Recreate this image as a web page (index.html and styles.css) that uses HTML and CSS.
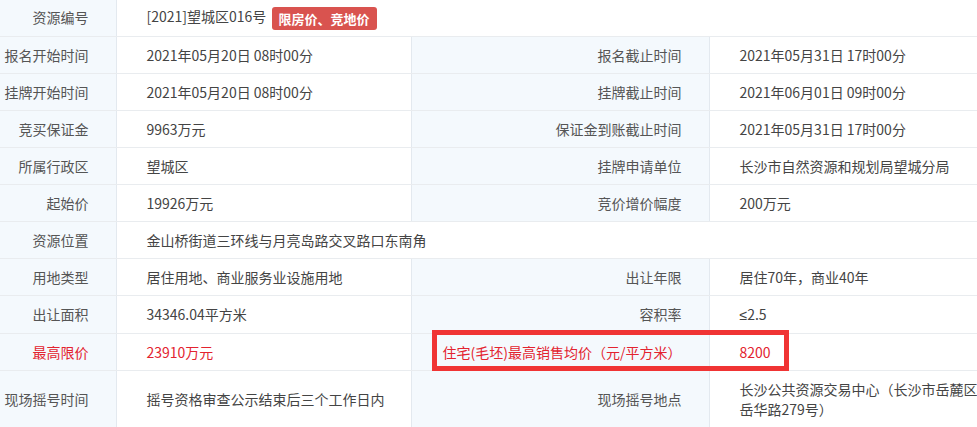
FILE: index.html
```html
<!DOCTYPE html>
<html lang="zh-CN">
<head>
<meta charset="utf-8">
<title>资源详情</title>
<link rel="stylesheet" href="styles.css">
</head>
<body>
<div class="wrap">
  <table class="info">
    <colgroup>
      <col class="c1"><col class="c2"><col class="c3"><col class="c4">
    </colgroup>
    <tbody>
      <tr>
        <th>资源编号</th>
        <td colspan="3">[2021]望城区016号 <span class="badge">限房价、竞地价</span></td>
      </tr>
      <tr>
        <th>报名开始时间</th><td>2021年05月20日 08时00分</td>
        <th>报名截止时间</th><td>2021年05月31日 17时00分</td>
      </tr>
      <tr>
        <th>挂牌开始时间</th><td>2021年05月20日 08时00分</td>
        <th>挂牌截止时间</th><td>2021年06月01日 09时00分</td>
      </tr>
      <tr>
        <th>竞买保证金</th><td>9963万元</td>
        <th>保证金到账截止时间</th><td>2021年05月31日 17时00分</td>
      </tr>
      <tr>
        <th>所属行政区</th><td>望城区</td>
        <th>挂牌申请单位</th><td>长沙市自然资源和规划局望城分局</td>
      </tr>
      <tr>
        <th>起始价</th><td>19926万元</td>
        <th>竞价增价幅度</th><td>200万元</td>
      </tr>
      <tr>
        <th>资源位置</th>
        <td colspan="3">金山桥街道三环线与月亮岛路交叉路口东南角</td>
      </tr>
      <tr>
        <th>用地类型</th><td>居住用地、商业服务业设施用地</td>
        <th>出让年限</th><td>居住70年，商业40年</td>
      </tr>
      <tr>
        <th>出让面积</th><td>34346.04平方米</td>
        <th>容积率</th><td><span class="sym">≤</span>2.5</td>
      </tr>
      <tr class="hl">
        <th class="red">最高限价</th><td class="red">23910万元</td>
        <th class="red">住宅(毛坯)最高销售均价（元/平方米）</th><td class="red">8200</td>
      </tr>
      <tr>
        <th>现场摇号时间</th><td>摇号资格审查公示结束后三个工作日内</td>
        <th>现场摇号地点</th><td>长沙公共资源交易中心（长沙市岳麓区岳华路279号）</td>
      </tr>
    </tbody>
  </table>
  <div class="mark"></div>
</div>
</body>
</html>
```
FILE: styles.css
```css
html, body {
  margin: 0;
  padding: 0;
  background: #fff;
}
.wrap {
  position: relative;
  width: 977px;
  height: 427px;
  overflow: hidden;
}
.info {
  width: 1000px;
  table-layout: fixed;
  border-collapse: collapse;
  margin-top: -2px;
  font-family: "Noto Sans CJK SC", "Microsoft YaHei", sans-serif;
  font-size: 14px;
  line-height: 20px;
}
.c1 { width: 116px; }
.c2 { width: 295px; }
.c3 { width: 298px; }
.c4 { width: 291px; }
.info th,
.info td {
  height: 20px;
  padding: 8px 0;
  border-bottom: 1px solid #e9ecef;
  vertical-align: middle;
  white-space: normal;
}
.info th {
  font-weight: normal;
  text-align: right;
  color: #555;
  background: #f4f9fd;
  padding-right: 27px;
  border-left: 1px solid #e3e9ef;
  border-right: 1px solid #e3e9ef;
}
.info tr > th:first-child {
  border-left: none;
}
.info td {
  color: #444;
  padding-left: 30px;
  padding-right: 14px;
}
.info .red {
  color: #e3232f;
}
.sym {
  font-family: "Liberation Sans", sans-serif;
}
.badge {
  display: inline-block;
  margin: -2px 0 -2px 2px;
  padding: 0 7px;
  height: 23px;
  line-height: 23px;
  font-size: 13px;
  font-weight: bold;
  color: #fff;
  background: #d9534f;
  border-radius: 3px;
  vertical-align: middle;
}
.mark {
  position: absolute;
  left: 432px;
  top: 330px;
  width: 347px;
  height: 31px;
  border: 5px solid #f03434;
  pointer-events: none;
}
```
